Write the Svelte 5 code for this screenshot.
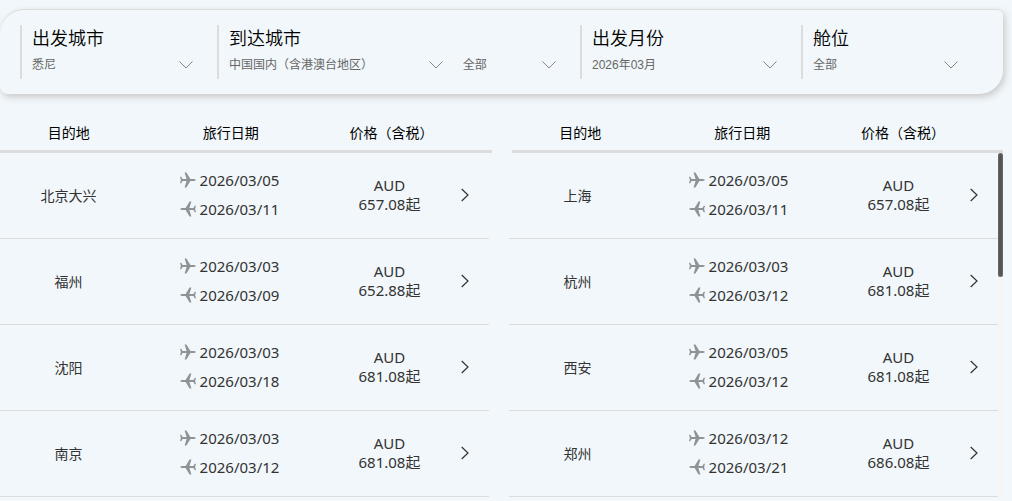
<script>
  const fields = [
    { title: '出发城市', selects: [{ id: 'origin', value: '悉尼' }] },
    {
      title: '到达城市',
      selects: [
        { id: 'region', value: '中国国内（含港澳台地区）' },
        { id: 'city', value: '全部', narrow: true }
      ]
    },
    { title: '出发月份', selects: [{ id: 'month', value: '2026年03月' }] },
    { title: '舱位', selects: [{ id: 'cabin', value: '全部' }] }
  ];

  const heads = ['目的地', '旅行日期', '价格（含税）'];

  const rows = [
    [
      { city: '北京大兴', out: '2026/03/05', back: '2026/03/11', price: '657.08' },
      { city: '上海', out: '2026/03/05', back: '2026/03/11', price: '657.08' }
    ],
    [
      { city: '福州', out: '2026/03/03', back: '2026/03/09', price: '652.88' },
      { city: '杭州', out: '2026/03/03', back: '2026/03/12', price: '681.08' }
    ],
    [
      { city: '沈阳', out: '2026/03/03', back: '2026/03/18', price: '681.08' },
      { city: '西安', out: '2026/03/05', back: '2026/03/12', price: '681.08' }
    ],
    [
      { city: '南京', out: '2026/03/03', back: '2026/03/12', price: '681.08' },
      { city: '郑州', out: '2026/03/12', back: '2026/03/21', price: '686.08' }
    ]
  ];
</script>

{#snippet plane(back)}
  <svg class="plane" class:back viewBox="0 0 16 16" aria-hidden="true">
    <path d="M0 4.8H1.2L2.6 7H6.6L4.6.6H6.4L10.4 6.9L14 7.1Q15.8 7.4 16 8Q15.8 8.6 14 8.9L10.4 9.1L6.4 15.4H4.6L6.6 9H2.6L1.2 11.2H0L.9 8Z" />
  </svg>
{/snippet}

<main>
  <form class="filters">
    {#each fields as field}
      <div class="field">
        <label class="title" for={field.selects[0].id}>{field.title}</label>
        <div class="selects">
          {#each field.selects as s}
            <div class="select" class:narrow={s.narrow}>
              <select id={s.id} aria-label={field.title}>
                <option>{s.value}</option>
              </select>
              <svg class="chevron" viewBox="0 0 14 8" aria-hidden="true">
                <path d="M.5.5L7 7L13.5.5" />
              </svg>
            </div>
          {/each}
        </div>
      </div>
    {/each}
  </form>

  <div class="results">
    <table>
      <thead>
        <tr>
          {#each [0, 1] as side}
            {#each heads as head}
              <th scope="col">{head}</th>
            {/each}
            <td></td>
            {#if side === 0}<td class="gap"></td>{/if}
          {/each}
        </tr>
      </thead>
      <tbody>
        {#each rows as pair}
          <tr>
            {#each pair as fare, side}
              <td>{fare.city}</td>
              <td class="dates">
                <span class="date">{@render plane(false)}{fare.out}</span>
                <span class="date">{@render plane(true)}{fare.back}</span>
              </td>
              <td class="price">
                <span>AUD</span>
                <span>{fare.price}起</span>
              </td>
              <td class="go">
                <button type="button" aria-label={fare.city}>
                  <svg viewBox="0 0 8 14" aria-hidden="true"><path d="M.7 1L7 7L.7 13" /></svg>
                </button>
              </td>
              {#if side === 0}<td class="gap"></td>{/if}
            {/each}
          </tr>
        {/each}
      </tbody>
    </table>
    <div class="track"><div class="thumb"></div></div>
  </div>
</main>

<style>
  :global(body) {
    margin: 0;
    background: #f1f7fa;
  }

  main {
    padding: 9px 9px 4px 0;
    font-family: 'Noto Sans', 'Noto Sans CJK SC', sans-serif;
    font-size: 14px;
    color: #333;
  }

  .filters {
    display: grid;
    grid-template-columns: 197fr 363fr 221fr 181fr;
    padding: 15px 21px 15px 20px;
    border-top: 1px solid #dcdcdc;
    border-radius: 24px 6px 24px 8px;
    box-shadow: 2px 3px 7px #c9c9c9;
    background: #f1f7fa;
  }

  .field {
    display: flex;
    flex-direction: column;
    gap: 6px;
    height: 54px;
    min-width: 0;
    box-sizing: border-box;
    padding: 0 24px 0 10px;
    border-left: 2px solid #dcdcdc;
  }

  .title {
    font-family: 'Noto Sans CJK SC', sans-serif;
    font-size: 18px;
    line-height: 24px;
    font-weight: 350;
    color: #000;
  }

  .selects {
    display: flex;
    gap: 20px;
  }

  .select {
    display: grid;
    flex: 213;
    align-items: center;
  }

  .narrow {
    flex: 93;
  }

  select {
    grid-area: 1 / 1;
    appearance: none;
    width: 100%;
    height: 20px;
    margin: 0;
    padding: 0;
    border: 0;
    background: transparent;
    font-family: 'Liberation Sans', 'Noto Sans CJK SC', sans-serif;
    font-size: 12px;
    color: #666;
  }

  .chevron {
    grid-area: 1 / 1;
    justify-self: end;
    width: 14px;
    height: 8px;
    fill: none;
    stroke: #888;
    pointer-events: none;
  }

  .results {
    position: relative;
    padding-top: 20px;
  }

  table,
  thead,
  tbody {
    display: block;
  }

  tr {
    display: grid;
    grid-template-columns: 137fr 185fr 135fr 32fr 20px 137fr 185fr 135fr 32fr;
  }

  tbody {
    padding-right: 5px;
  }

  th,
  td {
    display: flex;
    align-items: center;
    justify-content: center;
    padding: 0;
    white-space: nowrap;
  }

  thead th,
  thead td {
    height: 36px;
    border-bottom: 3px solid #dcdcdc;
    font-weight: 400;
    color: #000;
  }

  tbody td {
    height: 83px;
    padding-bottom: 2px;
    border-bottom: 1px solid #dcdcdc;
  }

  thead .gap,
  tbody .gap {
    border-bottom: 0;
  }

  .dates,
  .price {
    flex-direction: column;
    font-size: 15px;
  }

  .date {
    display: flex;
    align-items: center;
    gap: 4px;
    line-height: 29px;
  }

  .price span {
    line-height: 19px;
  }

  .plane {
    width: 16px;
    height: 16px;
    fill: #8e9396;
  }

  .back {
    transform: scaleX(-1);
  }

  .go {
    justify-content: flex-start;
  }

  button {
    display: flex;
    padding: 4px;
    border: 0;
    background: transparent;
  }

  button svg {
    width: 8px;
    height: 14px;
    fill: none;
    stroke: #333;
    stroke-width: 1.2;
  }

  .track {
    position: absolute;
    top: 59px;
    right: 0;
    bottom: 0;
    width: 5px;
    border-radius: 3px;
    background: #f5f5f5;
  }

  .thumb {
    height: 36%;
    border-radius: 3px;
    background: #535353;
    box-shadow: inset 0 0 2px #999;
  }
</style>
